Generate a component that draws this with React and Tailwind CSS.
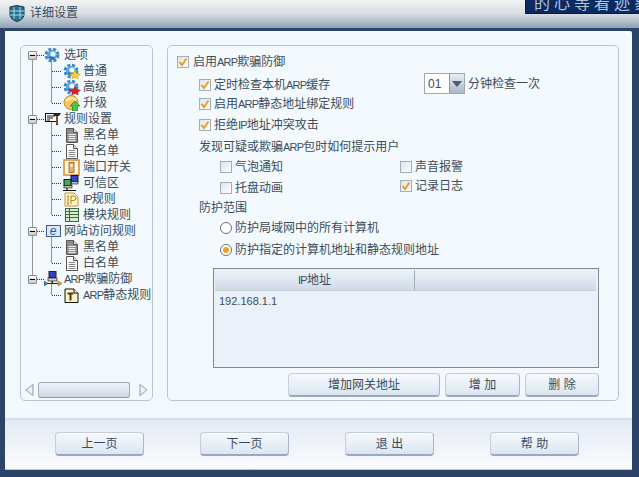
const CJK = { fontFamily: '"Liberation Sans", "Noto Sans CJK SC", sans-serif' }

// latin letters in the original are half width, so they run narrower than the cjk text
function Txt({ children }) {
  return String(children).split(/([A-Za-z]+)/).map((part, i) =>
    i % 2 ? <span key={i} className="text-[11px] tracking-[-0.8px]">{part}</span> : part
  )
}

function Gear({ badge }) {
  return (
    <svg width="18" height="16" viewBox="0 0 18 16">
      <circle cx="8" cy="8" r="5.800" fill="none" stroke="#3f86c8" strokeWidth="3.200" strokeDasharray="3 1.600" />
      <circle cx="8" cy="8" r="5" fill="#5da4df" />
      <path d="M4 10 A5 5 0 0 0 11 12 L9 9z" fill="#2f6fb0" />
      <circle cx="9" cy="7" r="2.600" fill="#eef8fc" />
      {badge === 'star' && <polygon points="12,7 13.600,10.500 17.500,11 14.600,13.400 15.400,16 12,14.500 8.600,16 9.400,13.400 6.500,11 10.400,10.500" fill="#f7d02c" stroke="#b99512" strokeWidth="0.400" />}
      {badge === 'red' && <polygon points="12,7 13.600,10.500 17.500,11 14.600,13.400 15.400,16 12,14.500 8.600,16 9.400,13.400 6.500,11 10.400,10.500" fill="#e02020" stroke="#a01010" strokeWidth="0.400" />}
    </svg>
  )
}

function Upgrade() {
  return (
    <svg width="18" height="16" viewBox="0 0 18 16">
      <circle cx="8" cy="7.500" r="7" fill="#f8c860" stroke="#c98a1a" />
      <path d="M3 6 Q8 1 13 5" stroke="#fdf0c8" strokeWidth="2" fill="none" />
      <polygon points="12,6 17,11 14.500,11 14.500,16 9.500,16 9.500,11 7,11" fill="#4fc24a" stroke="#1e7f22" strokeWidth="0.700" />
    </svg>
  )
}

function Tools() {
  return (
    <svg width="17" height="14" viewBox="0 0 17 14">
      <rect x="0.500" y="1.500" width="11" height="8" fill="#fff" stroke="#111" />
      <path d="M2 4h8M2 6h6M2 8h3" stroke="#111" />
      <path d="M8 1h8l-2 3h-1v9h-2V4H9z" fill="#222" />
      <rect x="11.500" y="4" width="1" height="8" fill="#c98a1a" />
    </svg>
  )
}

function Doc({ dark }) {
  return (
    <svg width="14" height="15" viewBox="0 0 14 15">
      <path d="M1.500 0.500h7l4 4v10h-11z" fill={dark ? '#8d8d8d' : '#fff'} stroke="#555" />
      <path d="M8.500 0.500v4h4" fill="#ddd" stroke="#555" />
      <path d="M3.500 6.500h7M3.500 8.500h7M3.500 10.500h7M3.500 12.500h7" stroke={dark ? '#eee' : '#888'} />
    </svg>
  )
}

function Port() {
  return (
    <svg width="17" height="17" viewBox="0 0 17 17">
      <rect x="1" y="1" width="15" height="15" fill="#fdf6e6" stroke="#d68d2c" strokeWidth="1.500" />
      <rect x="6" y="3.500" width="5" height="10" fill="#ecb25a" stroke="#8a4a10" strokeWidth="0.700" />
      <rect x="7.500" y="5" width="2" height="3" fill="#fff" />
    </svg>
  )
}

function Hosts() {
  return (
    <svg width="17" height="17" viewBox="0 0 17 17">
      <rect x="8" y="0.500" width="7" height="6" fill="#2b48c8" stroke="#111" />
      <rect x="8" y="6.500" width="7" height="2.500" fill="#bbb" stroke="#111" strokeWidth="0.600" />
      <rect x="1" y="4.500" width="7" height="6" fill="#48a858" stroke="#111" />
      <rect x="1" y="10.500" width="8" height="2.500" fill="#bbb" stroke="#111" strokeWidth="0.600" />
      <path d="M0 15.500h13M4 13v2" stroke="#111" strokeWidth="1.200" />
    </svg>
  )
}

function IpDoc() {
  return (
    <svg width="15" height="15" viewBox="0 0 15 15">
      <path d="M1 1h9l4 4v9H1z" fill="#fdf5c8" stroke="#c09a30" />
      <path d="M4 4v8M3 4h2M3 12h2M7 12V4h2.600a2 2 0 0 1 0 4.500H7" fill="none" stroke="#b87f18" />
    </svg>
  )
}

function Module() {
  return (
    <svg width="14" height="14" viewBox="0 0 14 14">
      <rect x="0.500" y="0.500" width="13" height="13" fill="#d9ecd0" stroke="#3d6a3d" />
      <path d="M1 3.500h12M1 6.500h12M1 9.500h12M4.500 1v12" stroke="#3d6a3d" />
    </svg>
  )
}

function IeIcon() {
  return (
    <div className="w-[15px] h-[12px] bg-[#dbe9f6] border border-[#3d5f8c] flex items-center justify-center text-[12px] leading-none italic text-[#1f5fb0]">e</div>
  )
}

function ArpNet() {
  return (
    <svg width="18" height="17" viewBox="0 0 18 17">
      <rect x="5" y="0.500" width="7" height="6" fill="#3444b8" stroke="#222" />
      <rect x="4" y="7" width="9" height="3" fill="#ccc" stroke="#222" strokeWidth="0.700" />
      <path d="M3 12.500h12M8.500 10v3" stroke="#222" />
      <polygon points="0,10 4,12.500 0,15" fill="#2aa0a8" stroke="#115" strokeWidth="0.400" />
      <polygon points="14,10 18,12.500 14,15" fill="#e29a3a" stroke="#742" strokeWidth="0.400" />
    </svg>
  )
}

function KeyDoc() {
  return (
    <svg width="15" height="15" viewBox="0 0 15 15">
      <path d="M1 1h9l4 4v9.500H1z" fill="#fdf6c8" stroke="#111" />
      <path d="M10 1v4h4" fill="#fff" stroke="#111" />
      <path d="M3.500 4.500h6v2h-2v6h-2v-6h-2z" fill="#5c3410" />
    </svg>
  )
}

const TREE = [
  { d: 0, icon: <Gear />, label: '选项', exp: true },
  { d: 1, icon: <Gear badge="star" />, label: '普通' },
  { d: 1, icon: <Gear badge="red" />, label: '高级' },
  { d: 1, icon: <Upgrade />, label: '升级' },
  { d: 0, icon: <Tools />, label: '规则设置', exp: true },
  { d: 1, icon: <Doc dark />, label: '黑名单' },
  { d: 1, icon: <Doc />, label: '白名单' },
  { d: 1, icon: <Port />, label: '端口开关' },
  { d: 1, icon: <Hosts />, label: '可信区' },
  { d: 1, icon: <IpDoc />, label: 'IP规则' },
  { d: 1, icon: <Module />, label: '模块规则' },
  { d: 0, icon: <IeIcon />, label: '网站访问规则', exp: true },
  { d: 1, icon: <Doc dark />, label: '黑名单' },
  { d: 1, icon: <Doc />, label: '白名单' },
  { d: 0, icon: <ArpNet />, label: 'ARP欺骗防御', exp: true },
  { d: 1, icon: <KeyDoc />, label: 'ARP静态规则' },
]

function TreeLines() {
  // dotted guides, y is relative to the first row
  const dots = '1 1'
  const mid = i => 8.5 + i * 16
  return (
    <svg className="absolute left-0 top-0 pointer-events-none" width="60" height="256">
      <path d={`M11.500 ${mid(0)}V${mid(14)}`} stroke="#333" strokeDasharray={dots} fill="none" />
      <path d={`M30.500 ${mid(0)}V${mid(3)}M30.500 ${mid(4)}V${mid(10)}M30.500 ${mid(11)}V${mid(13)}M30.500 ${mid(14)}V${mid(15)}`} stroke="#333" strokeDasharray={dots} fill="none" />
      {TREE.map((t, i) => (
        t.d === 0
          ? <path key={i} d={`M16 ${mid(i)}H23`} stroke="#333" strokeDasharray={dots} />
          : <path key={i} d={`M31 ${mid(i)}H41`} stroke="#333" strokeDasharray={dots} />
      ))}
    </svg>
  )
}

function Expander() {
  return (
    <div className="absolute left-[7px] top-[4px] w-[9px] h-[9px] border border-[#8d8d8d] rounded-[1px] bg-gradient-to-b from-white to-[#c8c8c8] flex items-center justify-center">
      <div className="w-[5px] h-px bg-black" />
    </div>
  )
}

function TreeRow({ row }) {
  return (
    <div className={`relative h-4 flex items-center text-[12px] text-[#3c4c5c] whitespace-nowrap ${row.d ? 'pl-[40px]' : 'pl-[22px]'}`}>
      {row.exp && <Expander />}
      <div className={`shrink-0 flex items-center justify-center ${row.d ? 'w-[21px]' : 'w-[20px]'}`}>{row.icon}</div>
      <span className="ml-[1px]"><Txt>{row.label}</Txt></span>
    </div>
  )
}

function Check({ on }) {
  return (
    <div className="w-[12px] h-[12px] shrink-0 border border-[#a3aebb] bg-gradient-to-br from-[#dde4ee] to-white flex items-center justify-center">
      {on && (
        <svg width="10" height="10" viewBox="0 0 10 10">
          <path d="M1.500 5 L4 8 L8.500 1.500" fill="none" stroke="#e8a028" strokeWidth="2" />
        </svg>
      )}
    </div>
  )
}

function CheckRow({ on, label, className = '' }) {
  return (
    <div className={`h-[18px] flex items-center gap-[3px] text-[12px] text-[#3c4c5c] whitespace-nowrap ${className}`}>
      <Check on={on} />
      <span><Txt>{label}</Txt></span>
    </div>
  )
}

function Radio({ on, label }) {
  return (
    <div className="h-[18px] flex items-center gap-[3px] text-[12px] text-[#3c4c5c] whitespace-nowrap">
      <div className="w-[12px] h-[12px] shrink-0 rounded-full border border-[#707070] bg-white flex items-center justify-center">
        {on && <div className="w-[6px] h-[6px] rounded-full bg-[#f0a020]" />}
      </div>
      <span>{label}</span>
    </div>
  )
}

function Btn({ children, className = '' }) {
  return (
    <div className={`h-6 flex items-center justify-center rounded-[4px] border border-[#c5ced9] border-b-[2px] border-b-[#9aa8c0] border-r-[#a9b5c8] bg-gradient-to-b from-[#f6f9fc] to-[#dbe5f1] text-[12px] text-[#3c4c5c] whitespace-pre ${className}`}>
      {children}
    </div>
  )
}

export default function App() {
  return (
    <div className="relative w-[639px] h-[477px] overflow-hidden flex flex-col bg-[#2c4468]" style={CJK}>
      {/* title bar */}
      <div className="h-[28px] shrink-0 flex items-center pl-[9px] pb-[2px] gap-[5px] bg-gradient-to-b from-[#f2f2f2] via-[#d8dde2] to-[#8fa1b4] text-[12px] text-[#3a4a5a]">
        <svg width="16" height="17" viewBox="0 0 16 17">
          <path d="M1 2 Q8 -1 15 2 V10 Q14 15 8 16.500 Q2 15 1 10Z" fill="#2c6f8f" stroke="#1c3a50" />
          <path d="M1 6h14M1 10h14M5 2v12M11 2v12" stroke="#9fe0e8" strokeWidth="1" />
        </svg>
        <span>详细设置</span>
      </div>
      {/* banner laid over the title bar, its text runs off the top and right */}
      <div className="absolute right-0 top-0 w-[114px] h-[14px] overflow-hidden bg-[#0c2a62] border-l border-b border-[#081a40]">
        <div className="mt-[-5px] pl-[8px] text-[16px] leading-[18px] tracking-[4px] text-[#b4c2da] whitespace-nowrap">的心等着迹象</div>
      </div>

      {/* window body */}
      <div className="flex-1 mt-[3px] ml-[5px] mr-[7px] mb-[7px] flex flex-col bg-[#f3f9fc] rounded-tr-[2px] min-h-0">
        <div className="flex gap-[14px] pt-[14px] pl-[15px] pr-[13px] h-[387px] shrink-0">
          {/* tree panel */}
          <div className="w-[133px] h-[356px] flex flex-col border border-[#bac6cd] rounded-[5px] overflow-hidden">
            <div className="relative flex-1 pt-[1px]">
              <div className="relative">
                <TreeLines />
                {TREE.map((row, i) => <TreeRow key={i} row={row} />)}
              </div>
            </div>
            <div className="h-[18px] shrink-0 flex items-center pl-[4px] mb-px">
              <svg width="9" height="12" viewBox="0 0 9 12"><path d="M8 0.500V11.500L1 6Z" fill="#eef3f8" stroke="#8e9bab" /></svg>
              <div className="ml-[4px] w-[92px] h-[16px] rounded-[3px] border border-[#a2adbc] border-b-[#8a97aa] bg-gradient-to-b from-[#eef3f9] to-[#cdd9e8]" />
              <svg className="ml-[9px]" width="9" height="12" viewBox="0 0 9 12"><path d="M1 0.500V11.500L8 6Z" fill="#eef3f8" stroke="#8e9bab" /></svg>
            </div>
          </div>

          {/* settings panel */}
          <div className="w-[452px] h-[356px] border border-[#bac6cd] rounded-[5px] pt-[7px] pl-[9px] text-[12px] text-[#3c4c5c]">
            <CheckRow on label="启用ARP欺骗防御" className="gap-[4px]" />
            <div className="ml-[22px] mt-[5px]">
              <div className="relative">
                <CheckRow on label="定时检查本机ARP缓存" />
                <div className="absolute left-[225px] top-[-3px] h-[21px] flex items-center gap-[3px] whitespace-nowrap">
                  <div className="w-[41px] h-[21px] flex border border-[#a0aab6] bg-white">
                    <span className="flex-1 pl-[3px] leading-[20px]">01</span>
                    <div className="w-[15px] bg-gradient-to-b from-[#e8eef5] to-[#a9b7c9] border-l border-[#8a97a8] flex items-center justify-center">
                      <div className="w-0 h-0 border-x-[5px] border-x-transparent border-t-[6px] border-t-[#4a5a78]" />
                    </div>
                  </div>
                  <span>分钟检查一次</span>
                </div>
              </div>
              <CheckRow on label="启用ARP静态地址绑定规则" className="mt-px" />
              <CheckRow on label="拒绝IP地址冲突攻击" className="mt-[3px]" />
              <div className="h-[18px] mt-[4px] leading-[18px]"><Txt>发现可疑或欺骗ARP包时如何提示用户</Txt></div>
              <div className="flex mt-[2px] ml-[21px]">
                <div className="w-[180px] flex flex-col gap-[3px]">
                  <CheckRow label="气泡通知" />
                  <CheckRow label="托盘动画" />
                </div>
                <div className="flex flex-col gap-px">
                  <CheckRow label="声音报警" />
                  <CheckRow on label="记录日志" />
                </div>
              </div>
              <div className="h-[18px] mt-[2px] leading-[18px]">防护范围</div>
              <div className="ml-[21px] mt-[2px] flex flex-col gap-[4px]">
                <Radio label="防护局域网中的所有计算机" />
                <Radio on label="防护指定的计算机地址和静态规则地址" />
              </div>
            </div>

            <div className="ml-[36px] mt-[9px] w-[386px] h-[100px] border border-[#7c8a94] bg-[#eaf1f8] p-px">
              <div className="h-[21px] flex bg-gradient-to-b from-[#edf2f7] to-[#cfdbe8] border-b border-[#c3ced9] mr-px">
                <div className="w-[200px] border-r border-[#9eabb8] flex items-center justify-center"><Txt>IP地址</Txt></div>
              </div>
              <div className="pl-[4px] pt-[2px] text-[11px] leading-[16px]">192.168.1.1</div>
            </div>

            <div className="flex mt-[5px] ml-[111px] gap-[5px]">
              <Btn className="w-[152px]">增加网关地址</Btn>
              <Btn className="w-[75px]">增 加</Btn>
              <Btn className="w-[74px]">删 除</Btn>
            </div>
          </div>
        </div>

        {/* footer */}
        <div className="flex-1 border-t-[2px] border-[#d5dde5] bg-gradient-to-b from-[#e3eaf4] to-[#fbfcfe] flex pl-[50px] pt-[12px] gap-[56px] border-b border-b-[#b8c4d4]">
          <Btn className="w-[89px]">上一页</Btn>
          <Btn className="w-[89px]">下一页</Btn>
          <Btn className="w-[89px]">退 出</Btn>
          <Btn className="w-[89px]">帮 助</Btn>
        </div>
      </div>
    </div>
  )
}
